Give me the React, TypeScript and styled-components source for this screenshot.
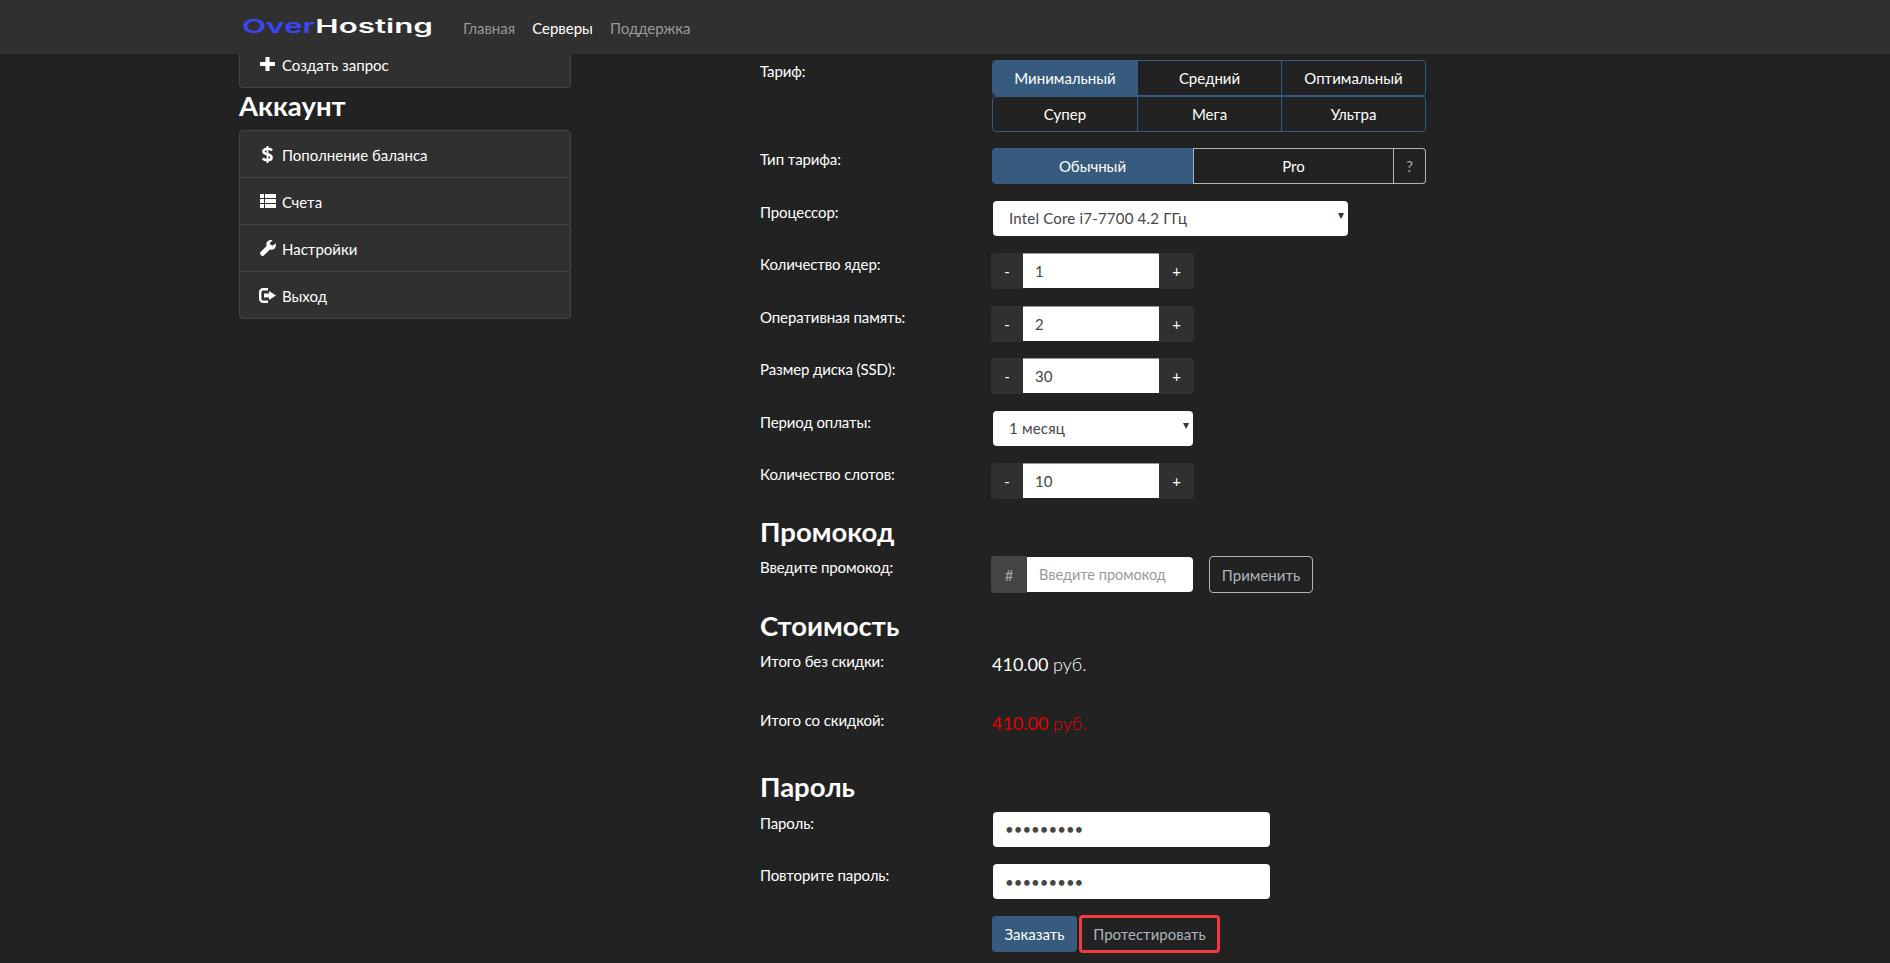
import React from "react"
import styled, { createGlobalStyle } from "styled-components"

const GlobalStyle = createGlobalStyle`
  html, body {
    margin: 0;
    height: 100%;
    background: #222222;
    overflow: hidden;
  }
  * {
    box-sizing: border-box;
  }
  body {
    font-family: Lato, "Open Sans", sans-serif;
    font-size: 15px;
    color: #ffffff;
  }
`

const Navbar = styled.nav`
  position: fixed;
  top: 0;
  left: 0;
  right: 0;
  z-index: 10;
  height: 54px;
  padding-left: 242px;
  display: flex;
  align-items: center;
  background: #303030;
`
const LogoSvg = styled.svg`
  width: 191px;
  height: 24px;
  margin-right: 30px;
  display: block;
`
const NavList = styled.div`
  display: flex;
  gap: 17px;
  padding-top: 2px;
`
const NavLink = styled.a<{ $active?: boolean }>`
  font-size: 15px;
  color: ${(p) => (p.$active ? "#ffffff" : "#999999")};
`

const Main = styled.main`
  display: flex;
  align-items: flex-start;
  padding: 40px 0 0 239px;
`
const Sidebar = styled.aside`
  width: 332px;
  flex: none;
`
const MenuCard = styled.div`
  background: #303030;
  border: 1px solid #444444;
  border-radius: 4px;
`
const MenuRow = styled.a`
  height: 47px;
  padding-left: 19px;
  display: flex;
  align-items: center;
  gap: 6px;
  color: #ffffff;
  font-size: 15px;
  &:first-child {
    height: 46px;
  }
  & + & {
    border-top: 1px solid #444444;
  }
`
const MenuText = styled.span`
  margin-top: 1px;
`
const IconBox = styled.span`
  width: 17px;
  height: 17px;
  flex: none;
  display: flex;
  align-items: center;
  justify-content: center;
  color: #ffffff;
`
const SideTitle = styled.h3`
  margin: 2px 0 9px;
  font-size: 27.5px;
  line-height: 31px;
  font-weight: 700;
  color: #ffffff;
`

const Form = styled.form`
  margin: 20px 0 0 189px;
  width: 680px;
`
const Row = styled.div<{ $height?: number; $gap?: number }>`
  display: grid;
  grid-template-columns: 232px 1fr;
  align-items: start;
  min-height: ${(p) => p.$height ?? 36}px;
  margin-bottom: ${(p) => p.$gap ?? 16.5}px;
`
const Label = styled.label`
  padding-top: 1px;
  line-height: 21px;
  font-size: 15px;
  letter-spacing: -0.1px;
  color: #ffffff;
`
const SectionTitle = styled.h3`
  margin: 0 0 9.5px;
  font-size: 27.5px;
  line-height: 31px;
  font-weight: 700;
  color: #ffffff;
`
const Segments = styled.div`
  width: 434px;
  display: grid;
  grid-template-columns: repeat(3, 1fr);
  border: 1px solid #375a7f;
  border-radius: 4px;
  overflow: hidden;
  & + & {
    margin-top: -0.5px;
  }
`
const Segment = styled.button<{ $active?: boolean }>`
  height: 34px;
  padding: 0;
  border: 0;
  border-left: 1px solid #375a7f;
  background: ${(p) => (p.$active ? "#375a7f" : "transparent")};
  color: #ffffff;
  font: inherit;
  &:first-child {
    border-left: 0;
  }
`
const TypeGroup = styled.div`
  width: 434px;
  height: 36px;
  display: grid;
  grid-template-columns: 201px 201px 32px;
`
const TypeButton = styled.button<{ $active?: boolean; $muted?: boolean }>`
  padding: 0;
  border: 1px solid ${(p) => (p.$active ? "#375a7f" : "#adb5bd")};
  background: ${(p) => (p.$active ? "#375a7f" : "transparent")};
  color: ${(p) => (p.$muted ? "#aaaaaa" : "#ffffff")};
  font: inherit;
  &:first-child {
    border-radius: 4px 0 0 4px;
  }
  &:last-child {
    border-left: 0;
    border-radius: 0 4px 4px 0;
  }
`
const SelectWrap = styled.div<{ $width: number }>`
  position: relative;
  width: ${(p) => p.$width}px;
  margin-left: 1px;
  &::after {
    content: "▾";
    position: absolute;
    right: 4px;
    top: 7px;
    font-size: 12px;
    line-height: 14px;
    color: #333333;
    pointer-events: none;
  }
`
const Select = styled.select`
  display: block;
  width: 100%;
  height: 35px;
  padding: 0 16px;
  border: 0;
  border-radius: 4px;
  appearance: none;
  background: #ffffff;
  color: #464545;
  font: inherit;
  font-size: 15px;
  letter-spacing: 0.2px;
`
const Stepper = styled.div`
  width: 203px;
  height: 36px;
  margin-left: -1px;
  display: flex;
`
const StepButton = styled.button<{ $side: "left" | "right" }>`
  flex: none;
  width: ${(p) => (p.$side === "left" ? 32 : 35)}px;
  padding: 0;
  border: 0;
  border-radius: ${(p) => (p.$side === "left" ? "3px 0 0 3px" : "0 3px 3px 0")};
  background: #303030;
  color: #ffffff;
  font: inherit;
`
const StepInput = styled.input`
  width: 136px;
  height: 35px;
  padding: 0 12px;
  border: 0;
  border-top: 1px solid #999999;
  background: #ffffff;
  color: #464545;
  font: inherit;
  font-size: 15px;
`
const PromoWrap = styled.div`
  display: flex;
  align-items: flex-start;
  margin-left: -1px;
`
const PromoAddon = styled.span`
  width: 36px;
  height: 37px;
  display: flex;
  align-items: center;
  justify-content: center;
  background: #444444;
  color: #aaaaaa;
  border-radius: 3px 0 0 3px;
`
const PromoInput = styled.input`
  width: 166px;
  height: 35px;
  margin: 1px 16px 0 0;
  padding: 0 12px;
  border: 0;
  border-radius: 0 4px 4px 0;
  background: #ffffff;
  color: #464545;
  font: inherit;
  font-size: 14.5px;
  &::placeholder {
    color: #999999;
  }
`
const OutlineButton = styled.button`
  width: 104px;
  height: 37px;
  padding: 0;
  border: 1px solid #adb5bd;
  border-radius: 4px;
  background: transparent;
  color: #adb5bd;
  font: inherit;
`
const Price = styled.div<{ $red?: boolean }>`
  margin-top: 2px;
  font-size: 18px;
  line-height: 24px;
  color: ${(p) => (p.$red ? "#e60000" : "#ffffff")};
`
const PriceUnit = styled.span`
  font-weight: 300;
`
const PasswordInput = styled.input`
  display: block;
  width: 277px;
  height: 35px;
  margin-left: 1px;
  padding: 0 12px;
  border: 0;
  border-radius: 4px;
  background: #ffffff;
  color: #464545;
  font: inherit;
  font-size: 15px;
`
const ActionBar = styled.div`
  margin-top: -2px;
  display: flex;
  align-items: center;
  gap: 2px;
`
const OrderButton = styled.button`
  width: 85px;
  height: 36px;
  padding: 0;
  border: 0;
  border-radius: 4px;
  background: #375a7f;
  color: #ffffff;
  font: inherit;
`
const TestButton = styled.button`
  width: 141px;
  height: 38px;
  padding: 0;
  border: 3px solid #ef3b3f;
  border-radius: 4px;
  background: #222222;
  color: #adb5bd;
  font: inherit;
`

const PlusIcon = () => (
  <svg width="15" height="14" viewBox="0 0 15 14" fill="currentColor">
    <path d="M5.5 0h4v5H15v4H9.5v5h-4V9H0V5h5.5z" />
  </svg>
)
const DollarIcon = () => (
  <svg width="11" height="17" viewBox="0 0 11 17" fill="none" stroke="currentColor" strokeWidth="2.6">
    <path d="M10 4.4C9 3.2 7.5 2.8 5.5 2.8 3 2.8 1.4 3.9 1.4 5.4c0 3.6 8.2 2 8.2 6 0 1.6-1.7 2.7-4.1 2.7-2.2 0-3.9-.6-4.8-1.9" />
    <path d="M5.5 0v17" strokeWidth="1.8" />
  </svg>
)
const ListIcon = () => (
  <svg width="16" height="14" viewBox="0 0 16 14" fill="currentColor">
    <path d="M0 0h4v4H0zM5 0h11v4H5zM0 5h4v4H0zM5 5h11v4H5zM0 10h4v4H0zM5 10h11v4H5z" />
  </svg>
)
const WrenchIcon = () => (
  <svg width="16" height="16" viewBox="0 0 16 16" fill="currentColor">
    <path d="M15.6 3.2 13 5.6l-2.4-.6-.6-2.3L12.6.3C10.8-.4 8.8 0 7.6 1.3 6.3 2.6 6 4.4 6.6 6L.4 12.2c-.6.6-.6 1.7 0 2.4l1 1c.6.6 1.7.6 2.4 0L10 9.4c1.6.6 3.4.2 4.7-1 1.2-1.4 1.6-3.4.9-5.2z" />
  </svg>
)
const LogoutIcon = () => (
  <svg width="17" height="15" viewBox="0 0 17 15" fill="currentColor">
    <path d="M4 0h5v2.4H4.2c-1 0-1.8.8-1.8 1.8v6.6c0 1 .8 1.8 1.8 1.8H9V15H4c-2.2 0-4-1.8-4-4V4c0-2.2 1.8-4 4-4z" />
    <path d="M10 3l7 4.5-7 4.5V9.6H5V5.4h5z" />
  </svg>
)

const MenuItem = ({ icon, text }: { icon: React.ReactNode; text: string }) => (
  <MenuRow>
    <IconBox>{icon}</IconBox>
    <MenuText>{text}</MenuText>
  </MenuRow>
)

const StepField = ({ label, value }: { label: string; value: string }) => (
  <Row>
    <Label>{label}</Label>
    <Stepper>
      <StepButton type="button" $side="left">-</StepButton>
      <StepInput defaultValue={value} />
      <StepButton type="button" $side="right">+</StepButton>
    </Stepper>
  </Row>
)

export default function App() {
  return (
    <>
      <GlobalStyle />
      <Navbar>
        <LogoSvg viewBox="0 0 191 24">
          <text
            x="0"
            y="18"
            textLength="191"
            lengthAdjust="spacingAndGlyphs"
            fontFamily="Inter, sans-serif"
            fontWeight="600"
            fontSize="19"
          >
            <tspan fill="#3b46f5">Over</tspan>
            <tspan fill="#ffffff">Hosting</tspan>
          </text>
        </LogoSvg>
        <NavList>
          <NavLink>Главная</NavLink>
          <NavLink $active>Серверы</NavLink>
          <NavLink>Поддержка</NavLink>
        </NavList>
      </Navbar>
      <Main>
        <Sidebar>
          <MenuCard>
            <MenuItem icon={<PlusIcon />} text="Создать запрос" />
          </MenuCard>
          <SideTitle>Аккаунт</SideTitle>
          <MenuCard>
            <MenuItem icon={<DollarIcon />} text="Пополнение баланса" />
            <MenuItem icon={<ListIcon />} text="Счета" />
            <MenuItem icon={<WrenchIcon />} text="Настройки" />
            <MenuItem icon={<LogoutIcon />} text="Выход" />
          </MenuCard>
        </Sidebar>
        <Form>
          <Row $height={71.5}>
            <Label>Тариф:</Label>
            <div>
              <Segments>
                <Segment type="button" $active>Минимальный</Segment>
                <Segment type="button">Средний</Segment>
                <Segment type="button">Оптимальный</Segment>
              </Segments>
              <Segments>
                <Segment type="button">Супер</Segment>
                <Segment type="button">Мега</Segment>
                <Segment type="button">Ультра</Segment>
              </Segments>
            </div>
          </Row>
          <Row>
            <Label>Тип тарифа:</Label>
            <TypeGroup>
              <TypeButton type="button" $active>Обычный</TypeButton>
              <TypeButton type="button">Pro</TypeButton>
              <TypeButton type="button" $muted>?</TypeButton>
            </TypeGroup>
          </Row>
          <Row>
            <Label>Процессор:</Label>
            <SelectWrap $width={355}>
              <Select defaultValue="i7">
                <option value="i7">Intel Core i7-7700 4.2 ГГц</option>
              </Select>
            </SelectWrap>
          </Row>
          <StepField label="Количество ядер:" value="1" />
          <StepField label="Оперативная память:" value="2" />
          <StepField label="Размер диска (SSD):" value="30" />
          <Row>
            <Label>Период оплаты:</Label>
            <SelectWrap $width={200}>
              <Select defaultValue="1">
                <option value="1">1 месяц</option>
              </Select>
            </SelectWrap>
          </Row>
          <StepField label="Количество слотов:" value="10" />

          <SectionTitle>Промокод</SectionTitle>
          <Row>
            <Label>Введите промокод:</Label>
            <PromoWrap>
              <PromoAddon>#</PromoAddon>
              <PromoInput placeholder="Введите промокод" />
              <OutlineButton type="button">Применить</OutlineButton>
            </PromoWrap>
          </Row>

          <SectionTitle>Стоимость</SectionTitle>
          <Row $height={42.5}>
            <Label>Итого без скидки:</Label>
            <Price>410.00 <PriceUnit>руб.</PriceUnit></Price>
          </Row>
          <Row $height={42.5} $gap={19.5}>
            <Label>Итого со скидкой:</Label>
            <Price $red>410.00 <PriceUnit>руб.</PriceUnit></Price>
          </Row>

          <SectionTitle>Пароль</SectionTitle>
          <Row>
            <Label>Пароль:</Label>
            <PasswordInput type="password" defaultValue="123456789" />
          </Row>
          <Row>
            <Label>Повторите пароль:</Label>
            <PasswordInput type="password" defaultValue="123456789" />
          </Row>
          <Row>
            <span />
            <ActionBar>
              <OrderButton type="button">Заказать</OrderButton>
              <TestButton type="button">Протестировать</TestButton>
            </ActionBar>
          </Row>
        </Form>
      </Main>
    </>
  )
}
